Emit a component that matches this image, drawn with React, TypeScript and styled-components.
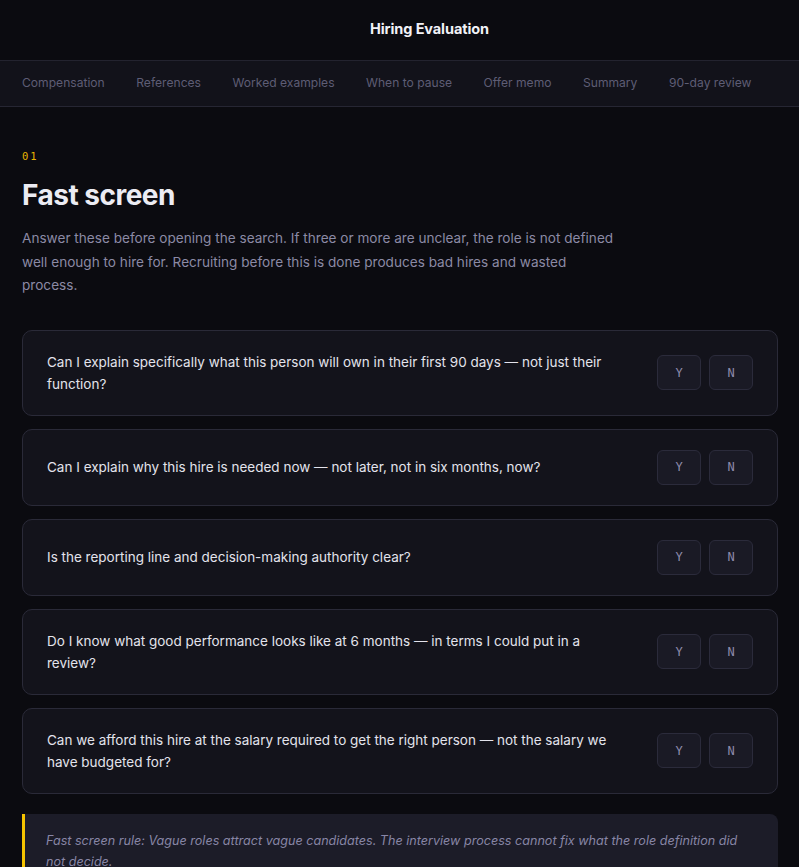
import React from 'react'
import styled, { createGlobalStyle } from 'styled-components'

const GlobalStyle = createGlobalStyle`
  html, body {
    margin: 0;
    padding: 0;
    background: #0b0b10;
  }
  body {
    font-family: 'Inter', 'Noto Sans', sans-serif;
    -webkit-font-smoothing: antialiased;
  }
  * { box-sizing: border-box; }
`

const Page = styled.div`
  min-height: 100vh;
  background: #0b0b10;
  color: #e6e6ee;
`

const Header = styled.header`
  height: 61px;
  display: flex;
  align-items: center;
  justify-content: center;
  padding-left: 60px;
  border-bottom: 1px solid #23232f;
`

const Title = styled.h1`
  margin: 0 0 3px;
  font-size: 14.5px;
  font-weight: 700;
  color: #f2f2f7;
  letter-spacing: -0.1px;
`

const Nav = styled.nav`
  height: 46px;
  display: flex;
  align-items: center;
  gap: 31.5px;
  padding: 0 22px 3px;
  background: #12121a;
  border-bottom: 1px solid #262633;
`

const NavItem = styled.a`
  font-size: 12.1px;
  color: #5e5d75;
  text-decoration: none;
  white-space: nowrap;
`

const Main = styled.main`
  padding: 42px 21px 0 22px;
`

const SectionNo = styled.div`
  font-family: 'DejaVu Sans Mono', 'Liberation Mono', monospace;
  font-size: 10.5px;
  letter-spacing: 2px;
  color: #e8b400;
  line-height: 14px;
`

const Heading = styled.h2`
  margin: 14px 0 0;
  font-size: 28px;
  font-weight: 700;
  letter-spacing: -0.5px;
  color: #ececf3;
  line-height: 36px;
`

const Lead = styled.p`
  margin: 14px 0 0;
  max-width: 600px;
  font-size: 13.6px;
  line-height: 23.5px;
  color: #8b8aa5;
`

const List = styled.div`
  margin-top: 32px;
  display: flex;
  flex-direction: column;
  gap: 13px;
`

const Card = styled.div`
  display: flex;
  align-items: center;
  justify-content: space-between;
  gap: 24px;
  padding: 20px 24px;
  background: #13131b;
  border: 1px solid #2a2a38;
  border-radius: 10px;
`

const Question = styled.div`
  flex: 0 1 578px;
  font-size: 13.5px;
  line-height: 22px;
  color: #e3e3ec;
`

const Choices = styled.div`
  display: flex;
  gap: 8px;
`

const Choice = styled.button`
  width: 44px;
  height: 35px;
  border-radius: 6px;
  background: #1a1a25;
  border: 1px solid #2b2b3b;
  color: #8e8bab;
  font-family: 'DejaVu Sans Mono', 'Liberation Mono', monospace;
  font-size: 12px;
  cursor: pointer;
`

const Note = styled.div`
  margin-top: 20px;
  padding: 16px 38px 14px 21px;
  background: #1c1c28;
  border-left: 3px solid #f5c300;
  border-radius: 0 8px 8px 0;
  font-size: 12.6px;
  font-style: italic;
  line-height: 21px;
  color: #8886a6;
`

const tabs = ['Compensation', 'References', 'Worked examples', 'When to pause', 'Offer memo', 'Summary', '90-day review']

const questions = [
  'Can I explain specifically what this person will own in their first 90 days — not just their function?',
  'Can I explain why this hire is needed now — not later, not in six months, now?',
  'Is the reporting line and decision-making authority clear?',
  'Do I know what good performance looks like at 6 months — in terms I could put in a review?',
  'Can we afford this hire at the salary required to get the right person — not the salary we have budgeted for?',
]

export default function App() {
  return (
    <Page>
      <GlobalStyle />
      <Header>
        <Title>Hiring Evaluation</Title>
      </Header>
      <Nav>
        {tabs.map((t) => (
          <NavItem key={t}>{t}</NavItem>
        ))}
      </Nav>
      <Main>
        <SectionNo>01</SectionNo>
        <Heading>Fast screen</Heading>
        <Lead>
          Answer these before opening the search. If three or more are unclear, the role is not defined well enough to
          hire for. Recruiting before this is done produces bad hires and wasted process.
        </Lead>
        <List>
          {questions.map((q) => (
            <Card key={q}>
              <Question>{q}</Question>
              <Choices>
                <Choice>Y</Choice>
                <Choice>N</Choice>
              </Choices>
            </Card>
          ))}
        </List>
        <Note>
          Fast screen rule: Vague roles attract vague candidates. The interview process cannot fix what the role
          definition did not decide.
        </Note>
      </Main>
    </Page>
  )
}
